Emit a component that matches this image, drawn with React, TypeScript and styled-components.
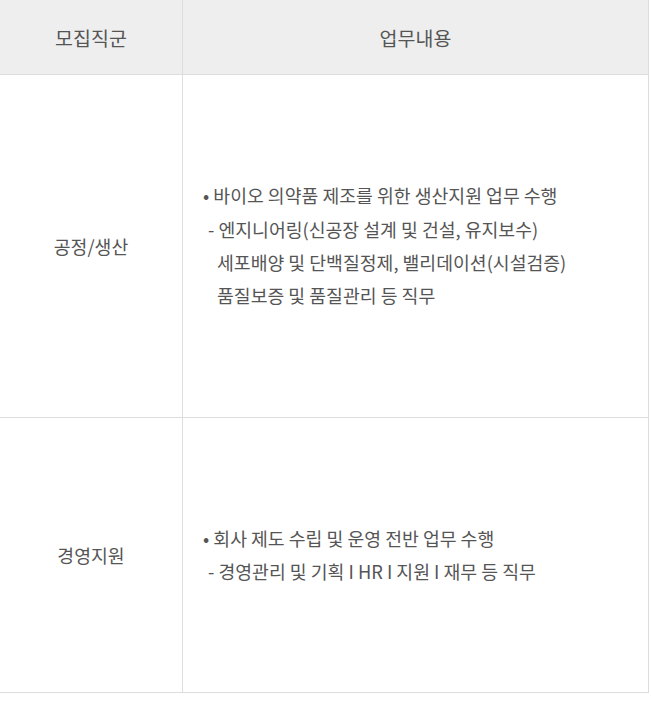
import styled, { createGlobalStyle } from "styled-components";

const GlobalStyle = createGlobalStyle`
  html, body {
    margin: 0;
    padding: 0;
    background: #fff;
  }
  body {
    font-family: "Noto Sans CJK KR", "Noto Sans", sans-serif;
    color: #555;
  }
`;

const Table = styled.table`
  width: 649px;
  border-collapse: collapse;
  table-layout: fixed;
  border-bottom: 1px solid #ddd;
`;

const HeadCell = styled.th<{ $first?: boolean }>`
  height: 74px;
  padding: 0;
  background: #eeeeee;
  font-weight: 400;
  font-size: 19.5px;
  color: #555;
  text-align: center;
  border-left: ${(p) => (p.$first ? "none" : "1px solid #ddd")};
  border-right: ${(p) => (p.$first ? "none" : "1px solid #ddd")};
  border-bottom: 1px solid #ddd;
`;

const NameCell = styled.td`
  width: 182px;
  padding: 0;
  font-size: 18.3px;
  text-align: center;
  vertical-align: middle;
  border-bottom: 1px solid #ddd;
`;

const DutyCell = styled.td<{ $height: number }>`
  height: ${(p) => p.$height}px;
  padding: 0 0 0 20px;
  font-size: 18.3px;
  line-height: 33.4px;
  text-align: left;
  vertical-align: middle;
  border-left: 1px solid #ddd;
  border-right: 1px solid #ddd;
  border-bottom: 1px solid #ddd;
`;

const Line = styled.div<{ $indent: number }>`
  padding-left: ${(p) => p.$indent}px;
  white-space: nowrap;
`;

type Job = {
  name: string;
  height: number;
  lines: { text: string; indent: number }[];
};

const jobs: Job[] = [
  {
    name: "공정/생산",
    height: 342,
    lines: [
      { text: "• 바이오 의약품 제조를 위한 생산지원 업무 수행", indent: 0 },
      { text: "- 엔지니어링(신공장 설계 및 건설, 유지보수)", indent: 5 },
      { text: "세포배양 및 단백질정제, 밸리데이션(시설검증)", indent: 14 },
      { text: "품질보증 및 품질관리 등 직무", indent: 14 },
    ],
  },
  {
    name: "경영지원",
    height: 274,
    lines: [
      { text: "• 회사 제도 수립 및 운영 전반 업무 수행", indent: 0 },
      { text: "- 경영관리 및 기획 I HR I 지원 I 재무 등 직무", indent: 5 },
    ],
  },
];

export default function App() {
  return (
    <>
      <GlobalStyle />
      <Table>
        <thead>
          <tr>
            <HeadCell $first style={{ width: 182 }}>
              모집직군
            </HeadCell>
            <HeadCell>업무내용</HeadCell>
          </tr>
        </thead>
        <tbody>
          {jobs.map((job) => (
            <tr key={job.name}>
              <NameCell>{job.name}</NameCell>
              <DutyCell $height={job.height}>
                {job.lines.map((l) => (
                  <Line key={l.text} $indent={l.indent}>
                    {l.text}
                  </Line>
                ))}
              </DutyCell>
            </tr>
          ))}
        </tbody>
      </Table>
    </>
  );
}
